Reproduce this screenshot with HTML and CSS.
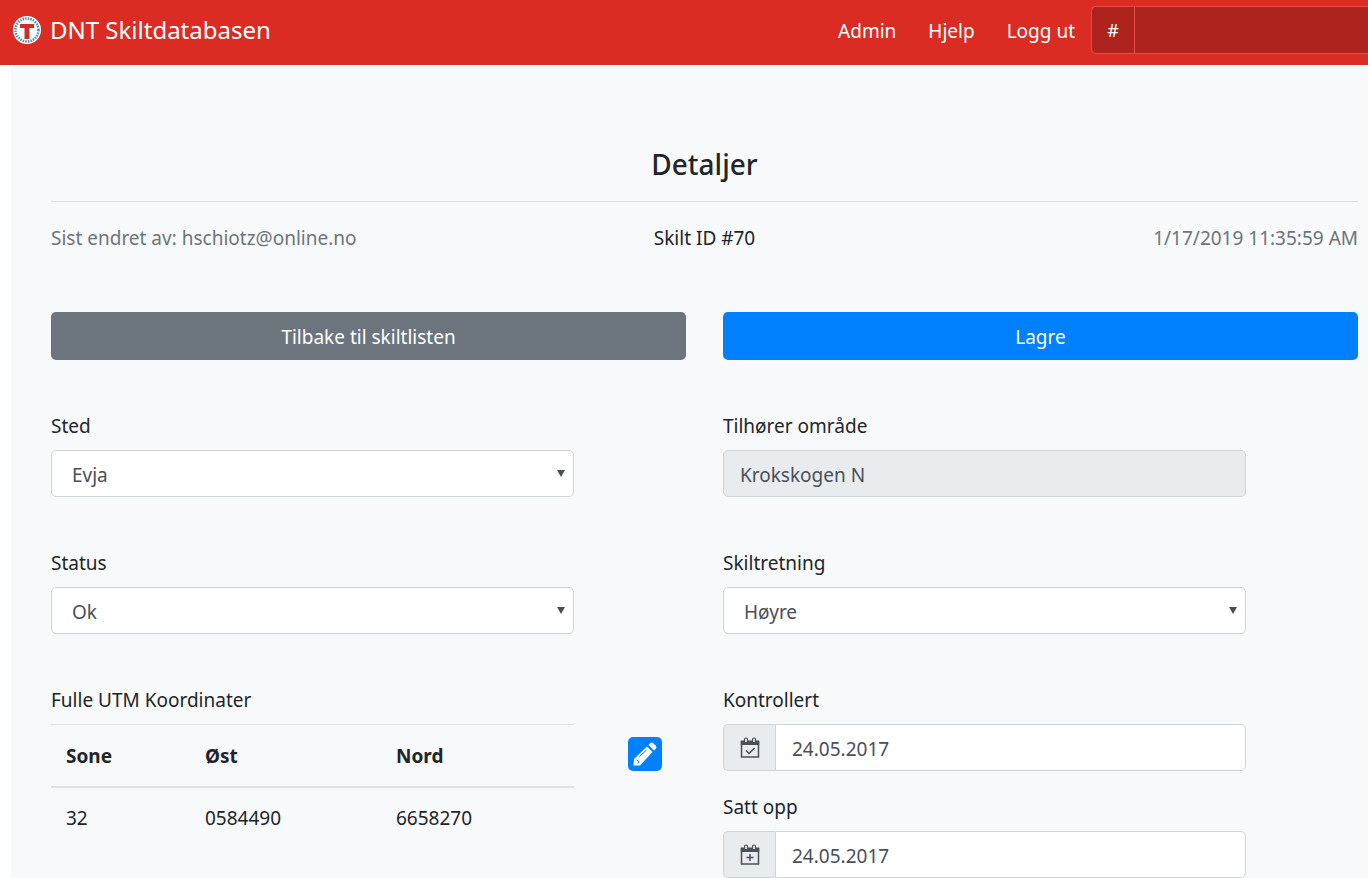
FILE: index.html
```html
<!DOCTYPE html>
<html lang="no">
<head>
<meta charset="utf-8">
<meta name="viewport" content="width=device-width, initial-scale=1">
<title>DNT Skiltdatabasen</title>
<link rel="stylesheet" href="styles.css">
</head>
<body>
<header class="navbar">
  <a class="brand" href="#">
    <svg class="logo" viewBox="0 0 56 56" aria-hidden="true">
      <circle cx="28" cy="28" r="28" fill="#fff"/>
      <circle cx="28" cy="28" r="23" fill="none" stroke="#3a93b5" stroke-width="5" stroke-dasharray="3 2.200"/>
      <path d="M14 16h28v8H33v22H23V24H14z" fill="#d02b26"/>
    </svg>
    <span>DNT Skiltdatabasen</span>
  </a>
  <nav class="nav-links">
    <a href="#">Admin</a>
    <a href="#">Hjelp</a>
    <a href="#">Logg ut</a>
  </nav>
  <form class="search">
    <label class="search-label" for="search">#</label>
    <input class="search-input" id="search" type="text">
  </form>
</header>
<main class="panel">
  <h1 class="title">Detaljer</h1>
  <div class="meta">
    <span class="muted">Sist endret av: hschiotz@online.no</span>
    <span>Skilt ID #70</span>
    <span class="muted meta-end">1/17/2019 11:35:59 AM</span>
  </div>
  <div class="columns actions">
    <button class="btn btn-secondary" type="button">Tilbake til skiltlisten</button>
    <button class="btn btn-primary" type="button">Lagre</button>
  </div>
  <form class="columns fields">
    <div class="field">
      <label for="place">Sted</label>
      <div class="select-wrap"><select class="control" id="place"><option>Evja</option></select></div>
    </div>
    <div class="field">
      <label for="area">Tilhører område</label>
      <input class="control" id="area" type="text" value="Krokskogen N" disabled>
    </div>
    <div class="field">
      <label for="status">Status</label>
      <div class="select-wrap"><select class="control" id="status"><option>Ok</option></select></div>
    </div>
    <div class="field">
      <label for="direction">Skiltretning</label>
      <div class="select-wrap"><select class="control" id="direction"><option>Høyre</option></select></div>
    </div>
    <div class="coords">
      <table class="table">
        <caption>Fulle UTM Koordinater</caption>
        <thead><tr><th class="zone">Sone</th><th class="east">Øst</th><th>Nord</th></tr></thead>
        <tbody><tr><td>32</td><td>0584490</td><td>6658270</td></tr></tbody>
      </table>
      <button class="edit" type="button" aria-label="Rediger koordinater">
        <svg viewBox="0 0 34 34" aria-hidden="true">
          <path d="M5.500 28.500 6 22 19 9.500 24.500 15 12 28.500z" fill="#fff"/>
          <path d="M20.500 8 22.500 6Q24 5 25.500 6.500L28 9Q29 10.500 28 11.500L26 13.500z" fill="#fff"/>
          <path d="M11.500 19.500 18.500 13M8.500 23l2.500 1.500-1 2" stroke="#0080fc" stroke-width="1" fill="none"/>
        </svg>
      </button>
    </div>
    <div class="dates">
      <div class="field">
        <label for="checked">Kontrollert</label>
        <div class="group">
          <span class="addon"><svg viewBox="0 0 20 22" aria-hidden="true">
            <path d="M1.500 5h17v15h-17z" fill="none" stroke="#495057" stroke-width="1.500"/>
            <path d="M.75 3.500h18.500V8H.75z" fill="#495057"/>
            <path d="M4.500 5V2.500a1.500 1.500 0 0 1 3 0V5M12.500 5V2.500a1.500 1.500 0 0 1 3 0V5" fill="#e9ecef" stroke="#495057" stroke-width="1.200"/>
            <path d="m6 13.500 3 3 5.500-5.500" fill="none" stroke="#495057" stroke-width="1.500"/>
          </svg></span>
          <input class="control" id="checked" type="text" value="24.05.2017">
        </div>
      </div>
      <div class="field">
        <label for="mounted">Satt opp</label>
        <div class="group">
          <span class="addon"><svg viewBox="0 0 20 22" aria-hidden="true">
            <path d="M1.500 5h17v15h-17z" fill="none" stroke="#495057" stroke-width="1.500"/>
            <path d="M.75 3.500h18.500V8H.75z" fill="#495057"/>
            <path d="M4.500 5V2.500a1.500 1.500 0 0 1 3 0V5M12.500 5V2.500a1.500 1.500 0 0 1 3 0V5" fill="#e9ecef" stroke="#495057" stroke-width="1.200"/>
            <path d="M10 10v7M6.500 13.500h7" fill="none" stroke="#495057" stroke-width="1.500"/>
          </svg></span>
          <input class="control" id="mounted" type="text" value="24.05.2017">
        </div>
      </div>
    </div>
  </form>
</main>
</body>
</html>
```
FILE: styles.css
```css
* { box-sizing: border-box; }
html { height: 100%; overflow: hidden; }
body {
  height: 100%;
  margin: 0;
  overflow: hidden;
  background: #fff;
  color: #212529;
  font: 19px/30px "Noto Sans", "Open Sans", sans-serif;
}
button, input, select { font: inherit; }
.navbar {
  display: flex;
  align-items: center;
  height: 65px;
  padding: 0 0 5px 13px;
  background: #db2c24;
}
.brand {
  display: flex;
  align-items: center;
  gap: 9px;
  margin-right: auto;
  color: #fff;
  font-size: 24px;
  text-decoration: none;
}
.logo { width: 28px; height: 28px; }
.nav-links { display: flex; gap: 32px; margin-right: 16px; padding-top: 2px; }
.nav-links a { color: #fff; text-decoration: none; }
.search {
  display: flex;
  flex: 0 0 277px;
  min-width: 0;
  height: 48px;
  border: 1px solid #e44d48;
  border-right: 0;
  border-radius: 5px 0 0 5px;
  background: #ae231d;
}
.search-label {
  display: flex;
  align-items: center;
  justify-content: center;
  flex: 0 0 43px;
  border-right: 1px solid #e44d48;
  color: #fff;
  font-size: 18px;
}
.search-input { flex: 1; width: 100%; min-width: 0; border: 0; background: transparent; color: #fff; }
.panel {
  min-height: 100%;
  margin-left: 11px;
  padding: 79px 10px 40px 40px;
  border-radius: 5px 0 0 0;
  background: #f8f9fb;
}
.title {
  margin: 0;
  padding-bottom: 17px;
  border-bottom: 1px solid #dee2e6;
  font-size: 28px;
  font-weight: 500;
  line-height: 40px;
  text-align: center;
}
.meta {
  display: grid;
  grid-template-columns: 1fr auto 1fr;
  padding: 21px 0 59px;
}
.muted { color: #6c757d; }
.meta-end { text-align: right; }
.columns { display: grid; grid-template-columns: 1fr 1fr; column-gap: 37px; }
.btn { height: 48px; padding-top: 3px; border: 0; border-radius: 5px; color: #fff; }
.btn-secondary { background: #6c757d; }
.btn-primary { background: #0080fc; }
.fields { margin-top: 51px; row-gap: 51px; }
.field { padding-right: 112px; }
.field label { display: block; margin-bottom: 9px; }
.control {
  display: block;
  width: 100%;
  height: 47px;
  padding: 3px 16px 0;
  border: 1px solid #ced4da;
  border-radius: 5px;
  background: #fff;
  color: #495057;
}
.control:disabled { background: #e9ecef; }
select.control { padding-left: 20px; appearance: none; }
.select-wrap { position: relative; }
.select-wrap::after {
  content: "";
  position: absolute;
  top: 20px;
  right: 9px;
  border: 4px solid transparent;
  border-top: 7px solid #495057;
  border-bottom: 0;
  pointer-events: none;
}
.coords { display: grid; grid-template-columns: 1fr 112px; }
.table { width: 100%; border-collapse: collapse; align-self: start; }
.table caption { margin-bottom: 9px; text-align: left; }
.table th, .table td { padding: 15px; text-align: left; }
.table th { padding-top: 16px; border-top: 1px solid #dee2e6; border-bottom: 2px solid #dee2e6; }
.zone { width: 139px; }
.east { width: 191px; }
.edit {
  width: 34px;
  height: 34px;
  margin: 52px 0 0 54px;
  padding: 0;
  border: 0;
  border-radius: 5px;
  background: #0080fc;
}
.edit svg { display: block; }
.dates { display: grid; row-gap: 21px; }
.group { display: flex; }
.addon {
  display: flex;
  align-items: center;
  justify-content: center;
  flex: 0 0 52px;
  border: 1px solid #ced4da;
  border-right: 0;
  border-radius: 5px 0 0 5px;
  background: #e9ecef;
}
.addon svg { width: 20px; height: 22px; }
.group .control { flex: 1; min-width: 0; border-radius: 0 5px 5px 0; }
```
